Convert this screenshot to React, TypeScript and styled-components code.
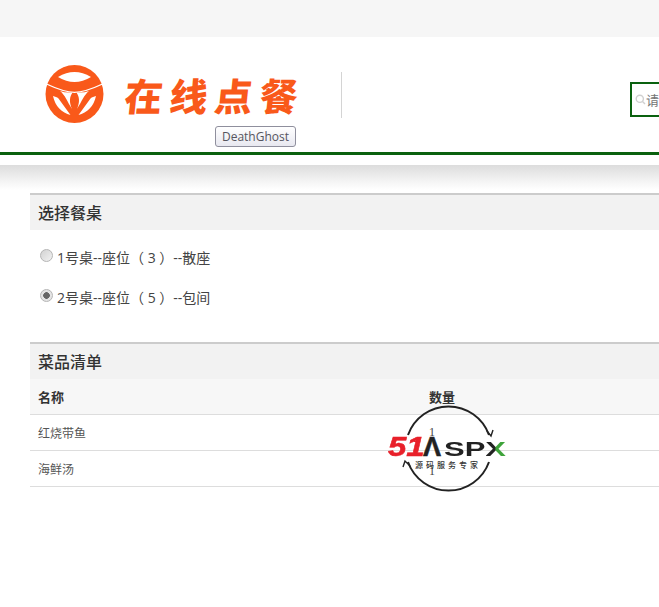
import React from "react";
import styled, { createGlobalStyle } from "styled-components";

const Global = createGlobalStyle`
  html, body { margin: 0; padding: 0; overflow: hidden; background: #fff; }
  body { font-family: "Open Sans", "Noto Sans CJK SC", sans-serif; color: #333; }
`;
const Page = styled.div`width: 659px; height: 607px; overflow: hidden; position: relative;`;
const TopBar = styled.div`height: 37px; background: #f6f6f6;`;
const Header = styled.header`
  height: 115px; width: 900px; display: flex; align-items: flex-start; position: relative;
  border-bottom: 3px solid #0a610f; box-sizing: content-box;
`;
const Logo = styled.div`display: flex; align-items: center; margin: 28px 0 0 45px; height: 60px; width: 296px; flex: none;`;
const LogoTitle = styled.div`
  margin-left: 20px; font: 900 38px/44px "Noto Sans CJK SC", sans-serif; color: #f9591a;
  letter-spacing: 7px; white-space: nowrap; transform: skewX(-6deg);
`;
const Divider = styled.div`margin-top: 35px; width: 1px; height: 46px; background: #d4d4d4; flex: none;`;
const Tooltip = styled.div`
  position: absolute; left: 215px; top: 89px; width: 81px; height: 21px; box-sizing: border-box;
  border: 1px solid #8f8f9d; border-radius: 3px;
  background: linear-gradient(#fff, #e8e8f0);
  font: 12px/19px "Open Sans", sans-serif; color: #55555f; text-align: center;
`;
const Search = styled.div`
  margin: 45px 0 0 288px; width: 240px; height: 35px; box-sizing: border-box; flex: none;
  border: 2px solid #0a610f; display: flex; align-items: center; padding-left: 3px;
  font-size: 13px; color: #757575;
`;
const Shadow = styled.div`height: 25px; margin-top: 10px; background: linear-gradient(#dcdcdc, #f4f4f4 65%, #fff);`;
const Main = styled.main`margin: 3px 0 0 30px; width: 900px;`;
const Section = styled.section`border-top: 2px solid #ccc;`;
const SectionTitle = styled.h2`
  margin: 0; height: 35px; padding-left: 8px; background: #f2f2f2;
  font: 500 16px/35px "Noto Sans CJK SC", sans-serif; color: #333;
`;
const Options = styled.div`padding: 7px 0 25px 8px; display: flex; flex-direction: column;`;
const Option = styled.label`
  height: 40px; display: flex; align-items: center; gap: 4px; font-size: 14px; color: #444;
  font-family: "Open Sans", "Noto Sans CJK SC", sans-serif;
`;
const Radio = styled.span<{ $on?: boolean }>`
  width: 13px; height: 13px; box-sizing: border-box; border-radius: 50%; border: 1px solid #b5b5b5;
  background: ${p => p.$on ? "radial-gradient(circle, #666 0 3px, #e4e4e4 3.6px)" : "linear-gradient(135deg, #d2d2d2, #f2f2f2)"};
  margin: -3px 0 0 2px;
`;
const Table = styled.table`width: 100%; border-collapse: collapse; table-layout: fixed;`;
const Th = styled.th<{ $w?: number }>`
  height: 35px; padding: 0 8px; box-sizing: border-box; text-align: left; background: #f7f7f7;
  border-bottom: 1px solid #ddd; font: 700 13px "Noto Sans CJK SC", sans-serif; color: #333;
  width: ${p => p.$w ? p.$w + "px" : "auto"};
`;
const Td = styled.td`
  height: 36px; padding: 0 8px; box-sizing: border-box; border-bottom: 1px solid #ddd;
  font: 12px "Noto Sans CJK SC", sans-serif; color: #555;
`;
const Qty = styled.span<{ $dy: number }>`font: 12px "Liberation Serif", serif; color: #444; position: relative; top: ${p => p.$dy}px;`;
const Watermark = styled.div`position: absolute; left: 386px; top: 403px; width: 126px; height: 92px;`;
const MarkText = styled.div`
  position: absolute; left: 2px; top: 27px; display: flex; align-items: baseline;
  font: italic 900 27px/34px "Liberation Sans", sans-serif; white-space: nowrap;
`;
const Red = styled.span`
  display: inline-block; color: #e8202a; transform: scaleX(1.22); transform-origin: left bottom;
  -webkit-text-stroke: .5px #e8202a; margin-right: 5px;
`;
const Lambda = styled.span`
  color: #222; font-style: normal; font-weight: 700; font-size: 27px; -webkit-text-stroke: .5px #222;
`;
const Letters = styled.span`
  display: inline-block; color: #222; font-style: normal; font-weight: 700; font-size: 20px;
  transform: scaleX(1.55); transform-origin: left bottom; margin-left: 3px;
`;
const GreenX = styled.span`
  background: linear-gradient(90deg, #222 48%, #3ea33a 48%);
  -webkit-background-clip: text; background-clip: text; color: transparent;
`;
const MarkSub = styled.div`
  position: absolute; left: 29px; top: 57px; font: 500 8px/10px "Noto Sans CJK SC", sans-serif;
  color: #333; letter-spacing: 3px; white-space: nowrap;
`;

const LogoIcon = () => (
  <svg width="60" height="60" viewBox="0 0 60 60" style={{ flex: "none" }}>
    <circle cx="29.5" cy="29" r="29" fill="#f9591a" />
    <path d="M13 12 Q29.5 2 46 12 Q29.5 22 13 12 Z" fill="#fff" />
    <path d="M1.5 19 C10 23 20 27.3 29.5 27.3 C39 27.3 49 23 57.5 19" fill="none" stroke="#fff" strokeWidth="1.3" />
    <path d="M8 31 C10 31.5 12 32 13.5 33.5 C17 38 21 44 25.5 50 C17 48 10 41 8 31 Z" fill="#fff" />
    <path d="M51 31 C49 31.5 47 32 45.5 33.5 C42 38 38 44 33.5 50 C42 48 49 41 51 31 Z" fill="#fff" />
    <path d="M15 26 C20 30 22 36 27 44 C24 37 24.5 32 27.5 27.5 Q20 28 15 26 Z" fill="#fff" />
    <path d="M44 26 C39 30 37 36 32 44 C35 37 34.5 32 31.5 27.5 Q39 28 44 26 Z" fill="#fff" />
  </svg>
);
const SearchGlyph = () => (
  <svg width="11" height="11" viewBox="0 0 11 11" fill="none" stroke="#d0d0d0" strokeWidth="1.4" style={{ flex: "none" }}>
    <circle cx="4.8" cy="4.8" r="3.6" /><path d="M7.5 7.5 10 10" />
  </svg>
);
const Ring = () => (
  <svg width="126" height="92" viewBox="0 0 126 92" style={{ position: "absolute", left: 0, top: 0 }} fill="none" stroke="#222" strokeWidth="2">
    <path d="M22 32 A43 43 0 0 1 103 32" />
    <path d="M103 59 A43 43 0 0 1 22 59" />
    <path d="M101 28 L105 33 L107 27 M24 63 L19 58 L17 64" strokeWidth="1.4" />
  </svg>
);

export default function App() {
  return (
    <Page>
      <Global />
      <TopBar />
      <Header>
        <Logo>
          <LogoIcon />
          <LogoTitle>在线点餐</LogoTitle>
        </Logo>
        <Divider />
        <Tooltip>DeathGhost</Tooltip>
        <Search><SearchGlyph />请输入关键词</Search>
      </Header>
      <Shadow />
      <Main>
        <Section>
          <SectionTitle>选择餐桌</SectionTitle>
          <Options>
            <Option><Radio />1号桌--座位（ 3 ）--散座</Option>
            <Option><Radio $on />2号桌--座位（ 5 ）--包间</Option>
          </Options>
        </Section>
        <Section>
          <SectionTitle>菜品清单</SectionTitle>
          <Table>
            <thead>
              <tr><Th $w={391}>名称</Th><Th>数量</Th></tr>
            </thead>
            <tbody>
              <tr><Td>红烧带鱼</Td><Td><Qty $dy={-1}>1</Qty></Td></tr>
              <tr><Td>海鲜汤</Td><Td><Qty $dy={2}>1</Qty></Td></tr>
            </tbody>
          </Table>
        </Section>
      </Main>
      <Watermark>
        <Ring />
        <MarkText>
          <Red>51</Red>
          <Lambda>Λ</Lambda>
          <Letters>SP<GreenX>X</GreenX></Letters>
        </MarkText>
        <MarkSub>源码服务专家</MarkSub>
      </Watermark>
    </Page>
  );
}
